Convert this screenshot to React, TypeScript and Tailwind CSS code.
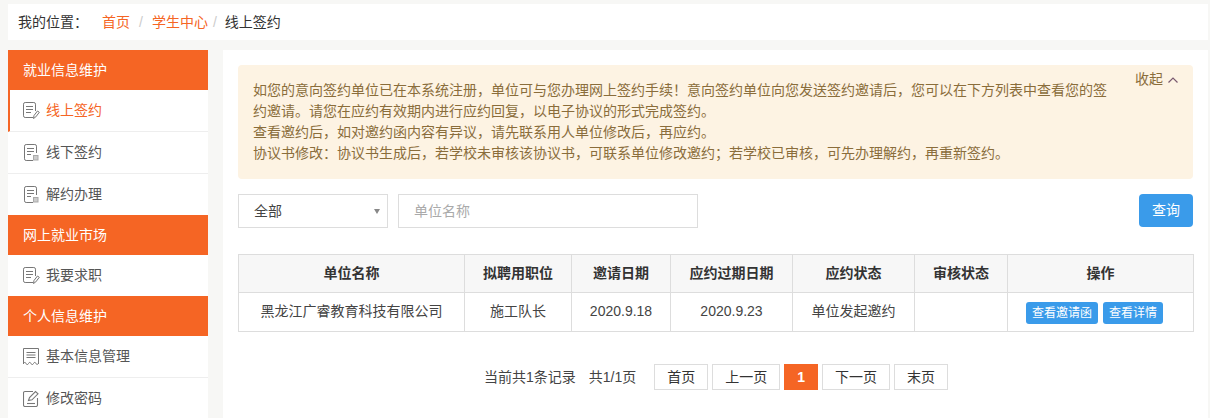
const font = "font-['Liberation_Sans','Noto_Sans_CJK_SC',sans-serif]";

function NoteIcon({ kind }: { kind: "pen" | "lock" }) {
  if (kind === "pen") {
    return (
      <svg width="17" height="17" viewBox="0 0 17 17" fill="none" stroke="#777" strokeWidth="1">
        <path d="M10 15.500H2.200A1.700 1.700 0 0 1 .5 13.800V2.200A1.700 1.700 0 0 1 2.200.5h8.600a1.700 1.700 0 0 1 1.700 1.700V9" />
        <path d="M3 4.500h7M3 7.500h7M3 10.500h5" />
        <path d="M10.500 16.500l.5-3 3.500-4.500 1.800 1.300-3.500 4.600z" />
      </svg>
    );
  }
  return (
    <svg width="15" height="17" viewBox="0 0 15 17" fill="none" stroke="#777" strokeWidth="1" className="ml-px">
      <path d="M9 16.500H2.200A1.700 1.700 0 0 1 .5 14.800V2.200A1.700 1.700 0 0 1 2.200.5h8.600a1.700 1.700 0 0 1 1.700 1.700V9" />
      <path d="M3 4.500h7M3 7.500h7M3 10.500h4" />
      <rect x="9.500" y="11.500" width="4.500" height="4.500" fill="#ccc" stroke="#aaa" />
    </svg>
  );
}

function ReceiptIcon() {
  return (
    <svg width="16" height="17" viewBox="0 0 16 17" fill="none" stroke="#777" strokeWidth="1">
      <path d="M.5 16V.5h15V16" />
      <path d="M.5 15.500c1.200-1.500 1.800-1.500 2.500 0s1.800 1.500 2.500 0 1.800-1.500 2.500 0 1.800 1.500 2.500 0 1.800-1.500 2.500 0 1.300 1 2.500 0" />
      <path d="M3.500 4.500h9M3.500 7h9M3.500 9.500h9" />
    </svg>
  );
}

function EditIcon() {
  return (
    <svg width="17" height="17" viewBox="0 0 17 17" fill="none" stroke="#777" strokeWidth="1.100">
      <path d="M10 1.500H2A1.500 1.500 0 0 0 .5 3v12A1.500 1.500 0 0 0 2 16.500h11a1.500 1.500 0 0 0 1.500-1.500V8" />
      <path d="M5.500 10.500l1-3 6-6 2.500 2.300-6 6z" />
      <path d="M4 13.500h8" />
    </svg>
  );
}

function SideHeader({ title }: { title: string }) {
  return <div className="h-10 bg-[#f56524] pl-[15px] text-sm leading-10 text-white">{title}</div>;
}

function SideItem({
  title,
  icon,
  active,
  last,
}: {
  title: string;
  icon: React.ReactNode;
  active?: boolean;
  last?: boolean;
}) {
  return (
    <div
      className={`flex items-center ${last ? "h-[41px]" : "h-[42px] border-b border-[#eee]"} ${
        active ? "border-l-2 border-l-[#f56524] pl-[13px] text-[#f56524]" : "pl-[15px] text-[#555]"
      }`}
    >
      <span className="flex w-[23px]">{icon}</span>
      <span className="pb-[2px] text-sm">{title}</span>
    </div>
  );
}

function PageBtn({ label, active }: { label: string; active?: boolean }) {
  return (
    <span
      className={`flex h-[26px] items-center justify-center border px-3 text-sm ${
        active ? "border-[#f56524] bg-[#f56524] font-bold text-white" : "border-[#ddd] text-[#333]"
      }`}
    >
      {label}
    </span>
  );
}

const th = "border border-[#ddd] pb-[2px] font-bold text-sm text-[#333]";
const td = "border border-[#ddd] pb-[2px] text-sm text-[#444]";

export default function App() {
  return (
    <div className={`h-[418px] w-[1210px] overflow-hidden bg-[#f7f7f5] pt-1 pl-2 ${font}`}>
      <div className="flex h-9 w-[1200px] items-center bg-white pl-[10px] text-sm text-[#333]">
        <span className="w-[84px]">我的位置：</span>
        <span className="text-[#f56524]">首页</span>
        <span className="mx-[9px] text-[#ccc]">/</span>
        <span className="text-[#f56524]">学生中心</span>
        <span className="ml-[5px] mr-[8px] text-[#ccc]">/</span>
        <span>线上签约</span>
      </div>
      <div className="mt-[10px] flex">
        <aside className="w-[200px] bg-white">
          <SideHeader title="就业信息维护" />
          <SideItem active title="线上签约" icon={<NoteIcon kind="pen" />} />
          <SideItem title="线下签约" icon={<NoteIcon kind="lock" />} />
          <SideItem last title="解约办理" icon={<NoteIcon kind="lock" />} />
          <SideHeader title="网上就业市场" />
          <SideItem last title="我要求职" icon={<NoteIcon kind="pen" />} />
          <SideHeader title="个人信息维护" />
          <SideItem title="基本信息管理" icon={<ReceiptIcon />} />
          <SideItem title="修改密码" icon={<EditIcon />} />
        </aside>
        <main className="ml-[15px] h-[400px] w-[985px] bg-white px-[15px] pt-[15px]">
          <div className="relative h-[114px] rounded bg-[#fdf3e3] pl-[15px] pr-[85px] pt-[15px] text-sm leading-[21px] text-[#8a6d3b]">
            <p>
              如您的意向签约单位已在本系统注册，单位可与您办理网上签约手续！意向签约单位向您发送签约邀请后，您可以在下方列表中查看您的签约邀请。请您在应约有效期内进行应约回复，以电子协议的形式完成签约。
            </p>
            <p>查看邀约后，如对邀约函内容有异议，请先联系用人单位修改后，再应约。</p>
            <p>协议书修改：协议书生成后，若学校未审核该协议书，可联系单位修改邀约；若学校已审核，可先办理解约，再重新签约。</p>
            <span className="absolute right-[14px] top-[4px] flex items-center gap-1">
              收起
              <svg width="12" height="8" viewBox="0 0 12 8" fill="none" stroke="#7a5a70" strokeWidth="1.200">
                <path d="M1.500 6.500 6 2l4.500 4.500" />
              </svg>
            </span>
          </div>
          <div className="mt-[15px] flex items-start">
            <div className="relative flex h-[34px] w-[150px] items-center border border-[#ddd] pl-[15px] text-sm text-[#444]">
              全部
              <span className="absolute right-[7px] top-[14px] h-0 w-0 border-x-[3.500px] border-t-[5px] border-x-transparent border-t-[#888]" />
            </div>
            <div className="ml-[10px] flex h-[34px] w-[300px] items-center border border-[#ddd] pl-[15px] text-sm text-[#aaa]">
              单位名称
            </div>
            <button className="ml-auto h-[33px] w-[54px] rounded bg-[#3a9bea] pb-[2px] text-sm text-white">查询</button>
          </div>
          <table className="mt-[26px] w-[955px] table-fixed border-collapse text-center">
            <colgroup>
              <col className="w-[226px]" />
              <col className="w-[107px]" />
              <col className="w-[99px]" />
              <col className="w-[122px]" />
              <col className="w-[122px]" />
              <col className="w-[93px]" />
              <col className="w-[186px]" />
            </colgroup>
            <thead>
              <tr className="h-[38px] bg-[#f7f7f7]">
                <th className={th}>单位名称</th>
                <th className={th}>拟聘用职位</th>
                <th className={th}>邀请日期</th>
                <th className={th}>应约过期日期</th>
                <th className={th}>应约状态</th>
                <th className={th}>审核状态</th>
                <th className={th}>操作</th>
              </tr>
            </thead>
            <tbody>
              <tr className="h-[39px]">
                <td className={td}>黑龙江广睿教育科技有限公司</td>
                <td className={td}>施工队长</td>
                <td className={td}>2020.9.18</td>
                <td className={td}>2020.9.23</td>
                <td className={td}>单位发起邀约</td>
                <td className={td}></td>
                <td className="border border-[#ddd] pl-[18px] text-left">
                  <span className="inline-flex gap-[5px] align-middle">
                    <span className="rounded-[3px] bg-[#3a9bea] px-[6px] py-[2px] text-xs leading-[18px] text-white">查看邀请函</span>
                    <span className="rounded-[3px] bg-[#3a9bea] px-[6px] py-[2px] text-xs leading-[18px] text-white">查看详情</span>
                  </span>
                </td>
              </tr>
            </tbody>
          </table>
          <div className="mt-[32px] flex items-center pl-[246px] text-sm text-[#444]">
            <span>当前共1条记录</span>
            <span className="ml-[13px] mr-[18px]">共1/1页</span>
            <span className="flex gap-[4px]">
              <PageBtn label="首页" />
              <PageBtn label="上一页" />
              <PageBtn label="1" active />
              <PageBtn label="下一页" />
              <PageBtn label="末页" />
            </span>
          </div>
        </main>
      </div>
    </div>
  );
}
